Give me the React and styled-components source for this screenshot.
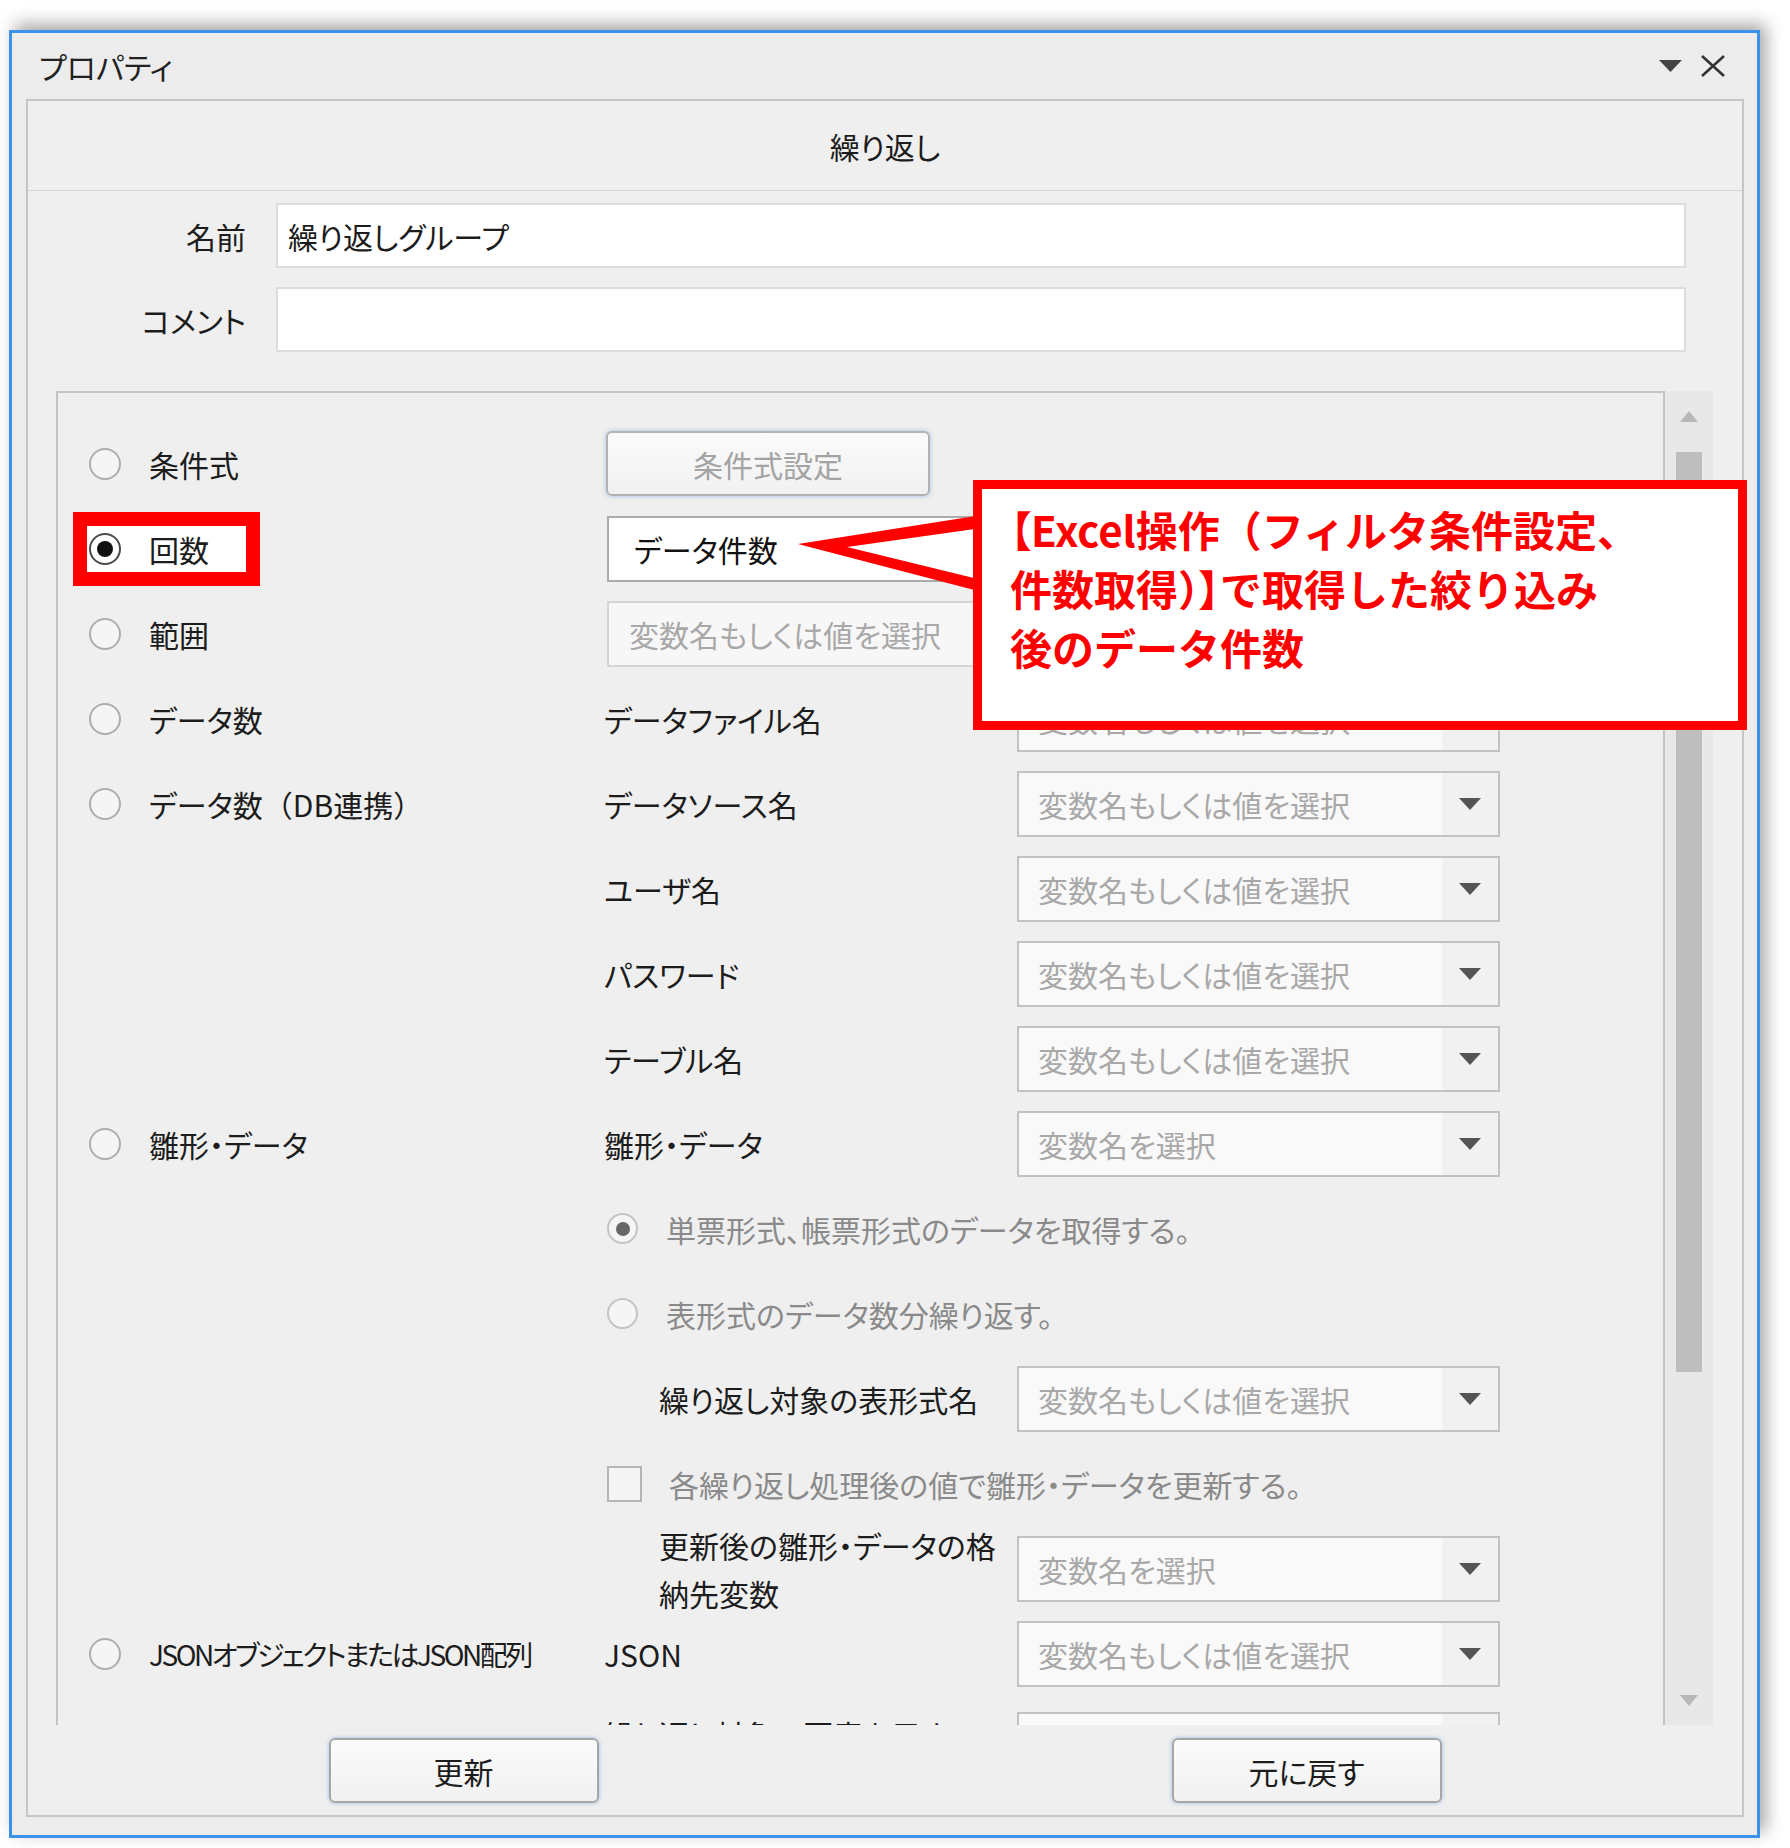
import React from "react";
import styled, { createGlobalStyle } from "styled-components";

const GlobalStyle = createGlobalStyle`
  html, body {
    margin: 0;
    padding: 0;
    background: #ffffff;
  }
  body {
    font-family: "Noto Sans CJK JP", "Noto Sans", sans-serif;
    color: #1c1c1c;
  }
  * {
    box-sizing: border-box;
  }
`;

const Page = styled.div`
  position: relative;
  width: 1790px;
  height: 1848px;
  padding: 30px 0 0 9px;
  overflow: hidden;
`;

const Window = styled.div`
  width: 1751px;
  height: 1808px;
  border: 3px solid #3b92e6;
  background: #ececec;
  box-shadow: 6px -6px 16px rgba(0, 0, 0, 0.35);
  display: flex;
  flex-direction: column;
  font-feature-settings: "palt" 1;
`;

const TitleBar = styled.div`
  height: 66px;
  display: flex;
  align-items: center;
  padding: 0 30px 0 27px;
  font-size: 30px;
  color: #222;
`;

const TitleText = styled.span`
  flex: 1;
`;

const TitleTools = styled.div`
  display: flex;
  align-items: center;
  gap: 17px;
`;

const Panel = styled.div`
  margin: 0 13px 18px 14px;
  border: 2px solid #c6c6c6;
  background: #efefef;
  padding-bottom: 12px;
`;

const PanelHeader = styled.div`
  height: 90px;
  border-bottom: 1px solid #d6d6d6;
  display: flex;
  align-items: center;
  justify-content: center;
  font-size: 30px;
`;

const FormBlock = styled.div`
  display: flex;
  flex-direction: column;
  gap: 19px;
  padding-top: 12px;
`;

const FormRow = styled.div`
  display: flex;
  align-items: center;
  height: 65px;
`;

const FormLabel = styled.div`
  width: 218px;
  text-align: right;
  font-size: 30px;
`;

const TextBox = styled.div`
  flex: 1;
  height: 65px;
  margin: 0 56px 0 30px;
  background: #ffffff;
  border: 2px solid #dcdcdc;
  display: flex;
  align-items: center;
  padding-left: 10px;
  font-size: 30px;
`;

const ScrollArea = styled.div`
  display: flex;
  height: 1334px;
  margin: 39px 29px 0 28px;
`;

const ScrollContent = styled.div`
  flex: 1;
  border-top: 2px solid #c4c4c4;
  border-left: 2px solid #c4c4c4;
  border-right: 2px solid #c4c4c4;
  overflow: hidden;
  padding: 28px 0 0 31px;
`;

const OptionGrid = styled.div`
  display: grid;
  grid-template-columns: 515px 413px 483px;
  grid-auto-rows: 85px;
  align-items: center;
  font-size: 30px;
`;

const ScrollBar = styled.div`
  width: 48px;
  background: #e8e8e8;
  display: flex;
  flex-direction: column;
  align-items: center;
  padding: 20px 0 19px;
`;

const ScrollThumb = styled.div`
  width: 26px;
  height: 920px;
  margin-top: 30px;
  background: #bebebe;
`;

const ScrollDown = styled.div`
  margin-top: auto;
  display: flex;
`;

const OptionCell = styled.label`
  display: flex;
  align-items: center;
  gap: 28px;
  white-space: nowrap;
  font-size: ${(p) => (p.$tight ? 28 : 30)}px;
  letter-spacing: ${(p) => (p.$tight ? -2.5 : 0)}px;
`;

const HighlightFrame = styled(OptionCell)`
  width: 187px;
  height: 74px;
  margin-left: -16px;
  padding-left: 2px;
  border: 14px solid #ff0000;
  background: #ffffff;
`;

const Plain = styled.span`
  font-feature-settings: normal;
`;

const Radio = styled.span`
  position: relative;
  flex: none;
  width: ${(p) => (p.$small ? 31 : 32)}px;
  height: ${(p) => (p.$small ? 31 : 32)}px;
  margin-left: ${(p) => (p.$small ? 3 : 0)}px;
  border-radius: 50%;
  border: 2px solid ${(p) => (p.$checked && !p.$disabled ? "#4a4a4a" : p.$disabled ? "#c4c4c4" : "#adadad")};
  background: ${(p) => (p.$checked && !p.$disabled ? "#ffffff" : "#f5f5f5")};

  &::after {
    content: "";
    display: ${(p) => (p.$checked ? "block" : "none")};
    position: absolute;
    left: 50%;
    top: 50%;
    width: ${(p) => (p.$disabled ? 14 : 16)}px;
    height: ${(p) => (p.$disabled ? 14 : 16)}px;
    border-radius: 50%;
    transform: translate(-50%, -50%);
    background: ${(p) => (p.$disabled ? "#666666" : "#111111")};
  }
`;

const CheckBox = styled.span`
  flex: none;
  width: 35px;
  height: 36px;
  margin-left: 3px;
  border: 2px solid #b5b5b5;
  background: #f4f4f4;
`;

const SubOption = styled(OptionCell)`
  grid-column: 2 / span 2;
  color: #8a8a8a;
  gap: ${(p) => (p.$check ? 27 : 28)}px;
`;

const FieldName = styled.div`
  grid-column: 2;
  padding-left: ${(p) => (p.$indent ? 55 : 0)}px;
  line-height: ${(p) => (p.$multi ? "48px" : "normal")};
  white-space: nowrap;
  align-self: ${(p) => (p.$top ? "start" : "center")};
  margin-top: ${(p) => (p.$top ? 14 : 0)}px;
`;

const Dropdown = styled.div`
  grid-column: 3;
  height: 66px;
  display: flex;
  border: 2px solid #c2c2c2;
  background: #f9f9f9;
  align-self: ${(p) => (p.$top ? "start" : "center")};
  margin-top: ${(p) => (p.$top ? 16 : 0)}px;
`;

const Placeholder = styled.span`
  flex: 1;
  display: flex;
  align-items: center;
  padding-left: 19px;
  color: #a8a8a8;
`;

const DropArrow = styled.span`
  width: 56px;
  background: #f1f1f1;
  display: flex;
  align-items: center;
  justify-content: center;
`;

const ValueInput = styled.div`
  grid-column: 2 / span 2;
  height: 66px;
  margin-left: 3px;
  display: flex;
  align-items: center;
  padding-left: ${(p) => (p.$empty ? 20 : 25)}px;
  border: 2px solid ${(p) => (p.$empty ? "#d4d4d4" : "#ababab")};
  background: ${(p) => (p.$empty ? "#f7f7f7" : "#ffffff")};
  color: ${(p) => (p.$empty ? "#a8a8a8" : "#111111")};
`;

const PushButton = styled.button`
  width: ${(p) => p.$width}px;
  height: 65px;
  border: 2px solid ${(p) => (p.disabled ? "#b2b2b2" : "#a6a6a6")};
  border-radius: 6px;
  background: linear-gradient(#fbfbfb, #f1f1f1);
  box-shadow: 0 0 4px rgba(90, 150, 225, 0.55);
  font-family: inherit;
  font-feature-settings: "palt" 1;
  font-size: 30px;
  color: ${(p) => (p.disabled ? "#a3a3a3" : "#1c1c1c")};
  padding: 0;
`;

const GridButton = styled(PushButton)`
  grid-column: 2 / span 2;
  justify-self: start;
  margin-left: 2px;
`;

const ButtonRow = styled.div`
  display: flex;
  justify-content: center;
  gap: 573px;
  margin-top: 13px;
`;

const CalloutPointer = styled.svg`
  position: absolute;
  left: 790px;
  top: 505px;
`;

const CalloutBox = styled.div`
  position: absolute;
  left: 973px;
  top: 480px;
  width: 774px;
  height: 250px;
  border: 9px solid #ff0000;
  background: #ffffff;
  padding: 10px 0 0 28px;
  color: #ff0000;
  font-family: "Noto Sans CJK JP", "Noto Sans", sans-serif;
  font-weight: 700;
  font-size: 42px;
  line-height: 59px;
  white-space: nowrap;
`;

const Bracket = styled.span`
  font-feature-settings: "palt" 1;
`;

const Triangle = ({ w, h, color, up }) => (
  <svg width={w} height={h} viewBox={`0 0 ${w} ${h}`}>
    <polygon points={up ? `0,${h} ${w / 2},0 ${w},${h}` : `0,0 ${w},0 ${w / 2},${h}`} fill={color} />
  </svg>
);

const CloseIcon = () => (
  <svg width="28" height="24" viewBox="0 0 28 24">
    <path d="M3 2 L25 22 M25 2 L3 22" stroke="#333" strokeWidth="2.6" fill="none" />
  </svg>
);

const Select = ({ text, top }) => (
  <Dropdown $top={top}>
    <Placeholder>{text}</Placeholder>
    <DropArrow>
      <Triangle w={22} h={12} color="#555" />
    </DropArrow>
  </Dropdown>
);

const ANY = "変数名もしくは値を選択";
const VAR = "変数名を選択";

const Option = ({ label, checked, tight }) => (
  <OptionCell $tight={tight}>
    <Radio $checked={checked} />
    <span>{label}</span>
  </OptionCell>
);

export default function App() {
  return (
    <Page>
      <GlobalStyle />
      <Window>
        <TitleBar>
          <TitleText>プロパティ</TitleText>
          <TitleTools>
            <Triangle w={23} h={12} color="#444" />
            <CloseIcon />
          </TitleTools>
        </TitleBar>
        <Panel>
          <PanelHeader>繰り返し</PanelHeader>
          <FormBlock>
            <FormRow>
              <FormLabel>名前</FormLabel>
              <TextBox>繰り返しグループ</TextBox>
            </FormRow>
            <FormRow>
              <FormLabel>コメント</FormLabel>
              <TextBox />
            </FormRow>
          </FormBlock>
          <ScrollArea>
            <ScrollContent>
              <OptionGrid>
                <Option label="条件式" />
                <GridButton $width={324} disabled>
                  条件式設定
                </GridButton>

                <HighlightFrame>
                  <Radio $checked />
                  回数
                </HighlightFrame>
                <ValueInput>データ件数</ValueInput>

                <Option label="範囲" />
                <ValueInput $empty>{ANY}</ValueInput>

                <Option label="データ数" />
                <FieldName>データファイル名</FieldName>
                <Select text={ANY} />

                <Option label={<>データ数<Plain>（DB連携）</Plain></>} />
                <FieldName>データソース名</FieldName>
                <Select text={ANY} />

                <FieldName>ユーザ名</FieldName>
                <Select text={ANY} />

                <FieldName>パスワード</FieldName>
                <Select text={ANY} />

                <FieldName>テーブル名</FieldName>
                <Select text={ANY} />

                <Option label="雛形・データ" />
                <FieldName>雛形・データ</FieldName>
                <Select text={VAR} />

                <SubOption>
                  <Radio $small $checked $disabled />
                  単票形式、帳票形式のデータを取得する。
                </SubOption>

                <SubOption>
                  <Radio $small $disabled />
                  表形式のデータ数分繰り返す。
                </SubOption>

                <FieldName $indent>繰り返し対象の表形式名</FieldName>
                <Select text={ANY} />

                <SubOption $check>
                  <CheckBox />
                  各繰り返し処理後の値で雛形・データを更新する。
                </SubOption>

                <FieldName $indent $multi>
                  更新後の雛形・データの格
                  <br />
                  納先変数
                </FieldName>
                <Select text={VAR} />

                <Option label="JSONオブジェクトまたはJSON配列" tight />
                <FieldName>JSON</FieldName>
                <Select text={ANY} />

                <FieldName $multi $top>
                  繰り返し対象の要素を示す
                  <br />
                  キー
                </FieldName>
                <Select text={ANY} top />
              </OptionGrid>
            </ScrollContent>
            <ScrollBar>
              <Triangle w={18} h={11} color="#b8b8b8" up />
              <ScrollThumb />
              <ScrollDown>
                <Triangle w={18} h={11} color="#b8b8b8" />
              </ScrollDown>
            </ScrollBar>
          </ScrollArea>
          <ButtonRow>
            <PushButton $width={270}>更新</PushButton>
            <PushButton $width={270}>元に戻す</PushButton>
          </ButtonRow>
        </Panel>
      </Window>

      <CalloutPointer width="200" height="100" viewBox="0 0 200 100">
        <polygon points="8,39 192,10 192,87" fill="#ff0000" />
        <polygon points="57,42 192,23 192,75" fill="#ffffff" />
      </CalloutPointer>
      <CalloutBox>
        <Bracket>【</Bracket>Excel操作（フィルタ条件設定、
        <br />
        件数取得）<Bracket>】</Bracket>で取得した絞り込み
        <br />
        後のデータ件数
      </CalloutBox>
    </Page>
  );
}
